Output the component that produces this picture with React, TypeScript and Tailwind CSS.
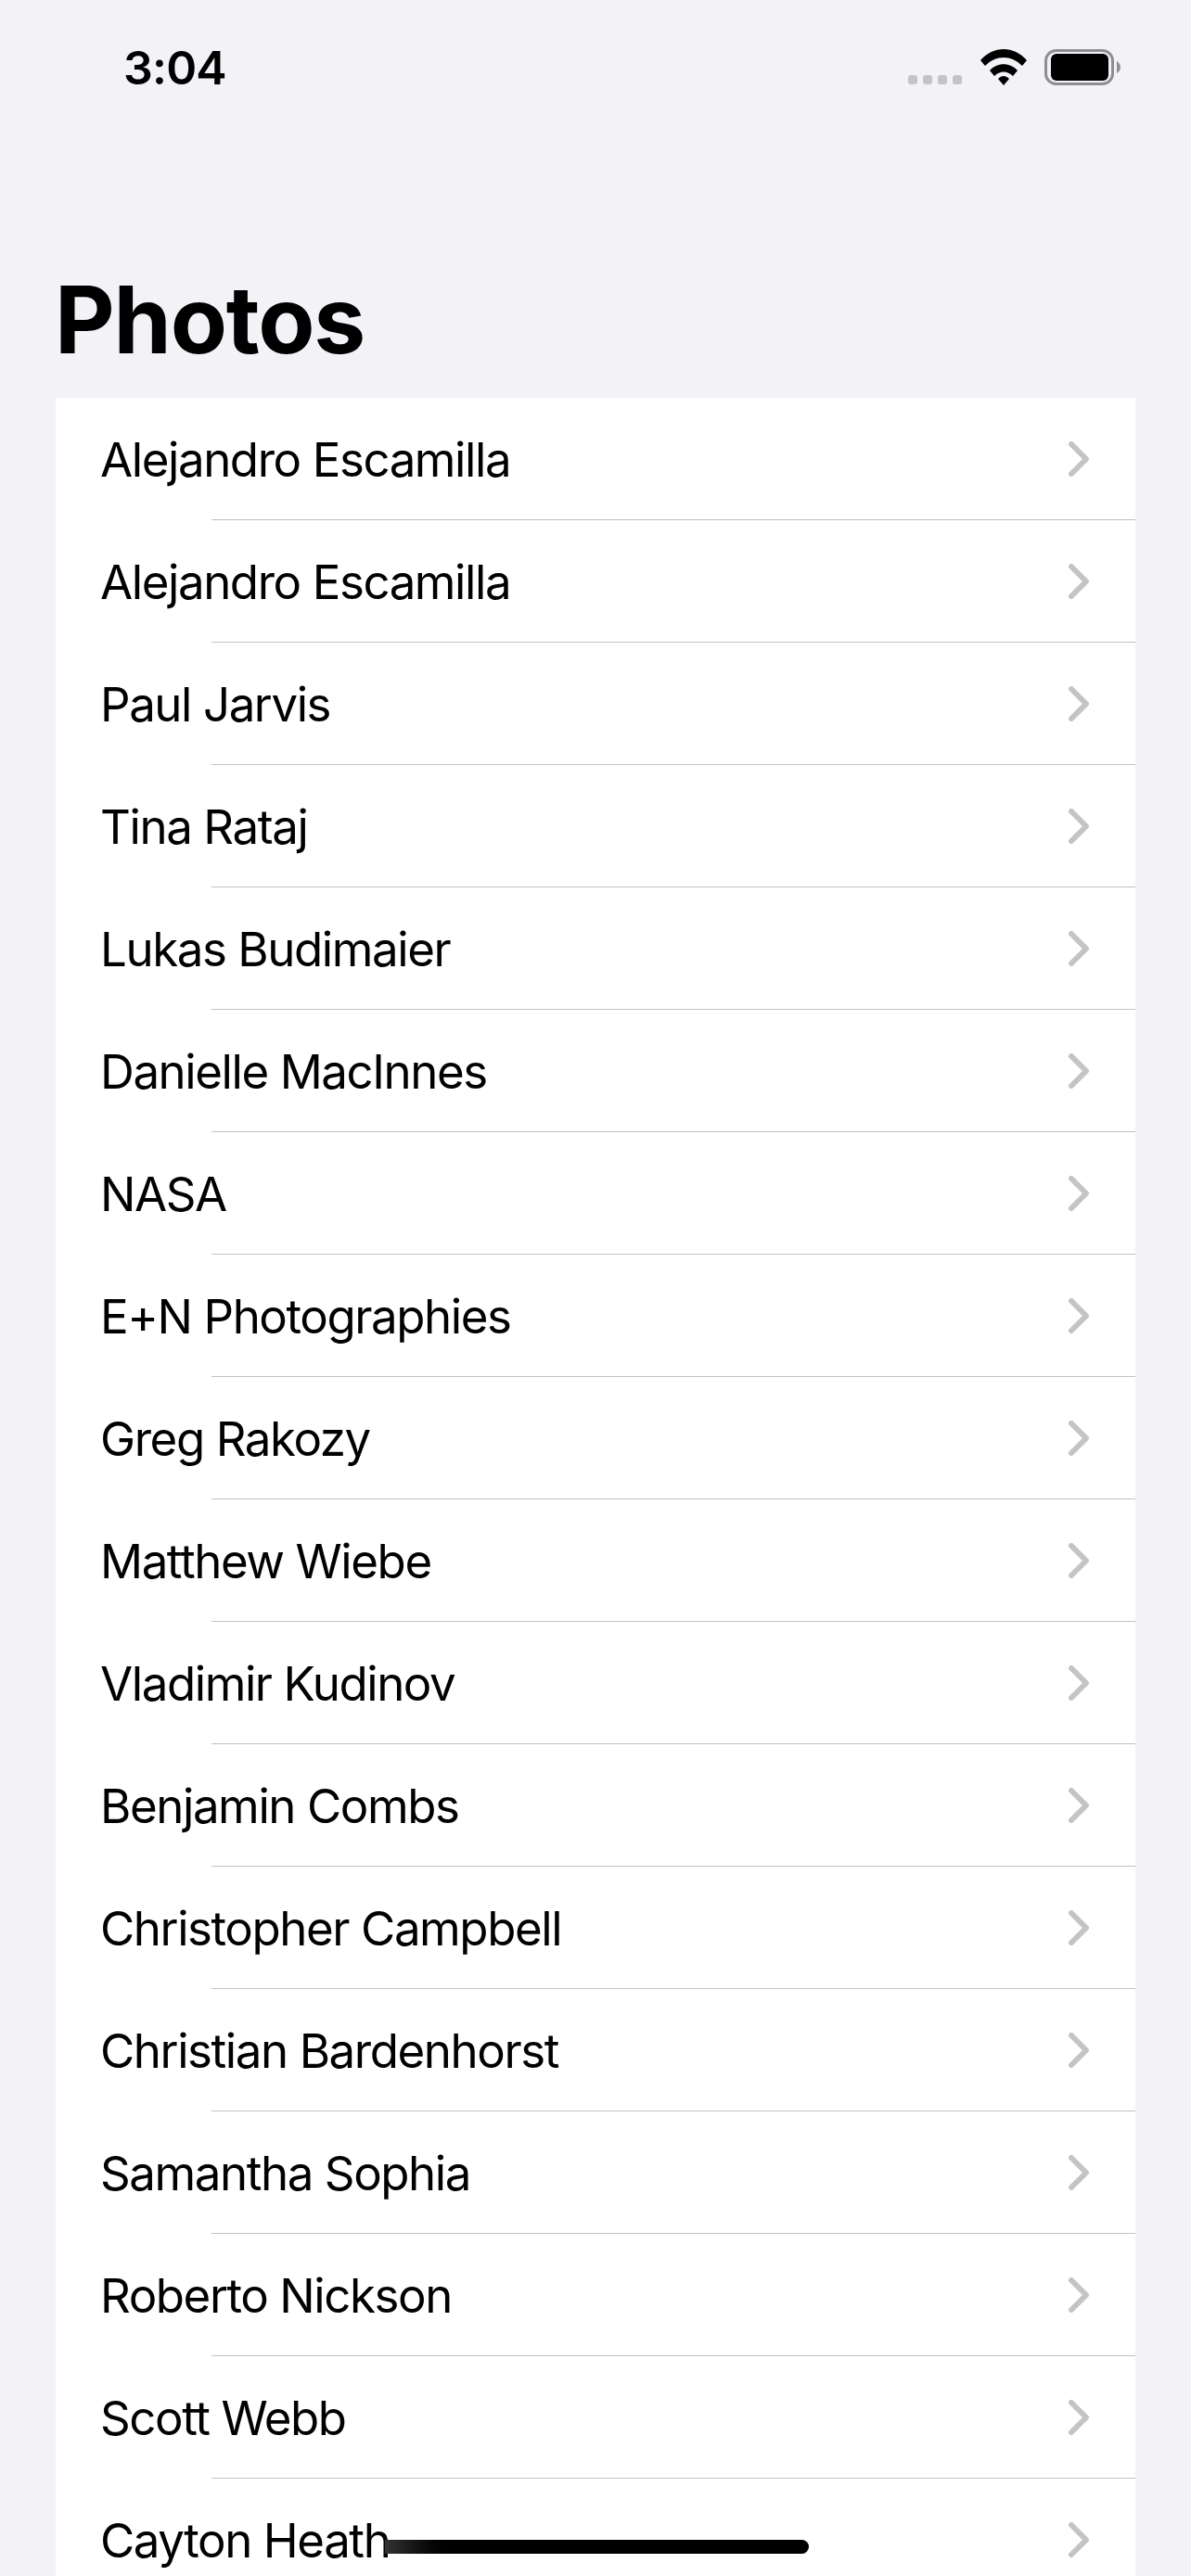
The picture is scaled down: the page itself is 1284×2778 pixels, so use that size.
const names = [
  'Alejandro Escamilla',
  'Alejandro Escamilla',
  'Paul Jarvis',
  'Tina Rataj',
  'Lukas Budimaier',
  'Danielle MacInnes',
  'NASA',
  'E+N Photographies',
  'Greg Rakozy',
  'Matthew Wiebe',
  'Vladimir Kudinov',
  'Benjamin Combs',
  'Christopher Campbell',
  'Christian Bardenhorst',
  'Samantha Sophia',
  'Roberto Nickson',
  'Scott Webb',
  'Cayton Heath',
]

function Chevron() {
  return (
    <svg width="24" height="38" viewBox="0 0 24 38" fill="none" className="shrink-0">
      <path d="M4 3 L20 19 L4 35" stroke="#c4c4c7" strokeWidth="6" strokeLinecap="round" strokeLinejoin="round" />
    </svg>
  )
}

function StatusIcons() {
  return (
    <div className="flex items-start">
      <div className="mt-[28px] flex gap-[6px]">
        <span className="h-[10px] w-[10px] rounded-[3px] bg-[#c4c4c8]" />
        <span className="h-[10px] w-[10px] rounded-[3px] bg-[#c4c4c8]" />
        <span className="h-[10px] w-[10px] rounded-[3px] bg-[#c4c4c8]" />
        <span className="h-[10px] w-[10px] rounded-[3px] bg-[#c4c4c8]" />
      </div>
      <svg width="50" height="39" viewBox="0 0 50 39" className="ml-[20px]">
        <path d="M0 12 C14 -4 36 -4 50 12 L45 18 C33 6 17 6 5 18 Z" fill="#000" />
        <path d="M10 23 C18 14 32 14 40 23 L35 29 C29 23 21 23 15 29 Z" fill="#000" />
        <path d="M19 32 C23 28 27 28 31 32 L25 39 Z" fill="#000" />
      </svg>
      <svg width="82" height="39" viewBox="0 0 82 39" className="ml-[19px]">
        <rect x="1.5" y="1.5" width="72" height="36" rx="11" fill="none" stroke="#8e8e92" strokeWidth="3" />
        <rect x="7" y="5" width="62" height="29" rx="6" fill="#000" />
        <path d="M78 13 C80 14 82 17 82 19.5 C82 22 80 25 78 26 Z" fill="#8e8e92" />
      </svg>
    </div>
  )
}

export default function App() {
  return (
    <div
      className="relative h-[2778px] w-[1284px] overflow-hidden bg-[#f2f2f7] text-black"
      style={{ fontFamily: 'Inter, "Liberation Sans", sans-serif' }}
    >
      <div className="flex h-[145px] items-start justify-between pl-[133px] pr-[76px] pt-[40px]">
        <span className="text-[50px] font-semibold leading-[66px] tracking-[-0.8px]">3:04</span>
        <div className="pt-[13px]">
          <StatusIcons />
        </div>
      </div>
      <h1 className="h-[284px] pl-[59px] pt-[140px] text-[100px] font-bold leading-[120px] tracking-[-1.2px]">
        Photos
      </h1>
      <ul className="mx-[60px] bg-white">
        {names.map((name, i) => (
          <li key={i} className="flex h-[132px] flex-col">
            <div className="flex h-[131px] items-center pl-[48px]">
              <span className="mt-[3px] text-[51px] font-[380] leading-[62px] tracking-[-1.42px]">{name}</span>
              <div className="ml-auto mr-[49px]">
                <Chevron />
              </div>
            </div>
            <div className="ml-[168px] h-px bg-[#c2c2c4]" />
          </li>
        ))}
      </ul>
      <div className="absolute left-[415px] top-[2739px] h-[15px] w-[457px] rounded-r-full rounded-l-[6px] bg-gradient-to-r from-[#333333] to-black to-[18%]" />
    </div>
  )
}
